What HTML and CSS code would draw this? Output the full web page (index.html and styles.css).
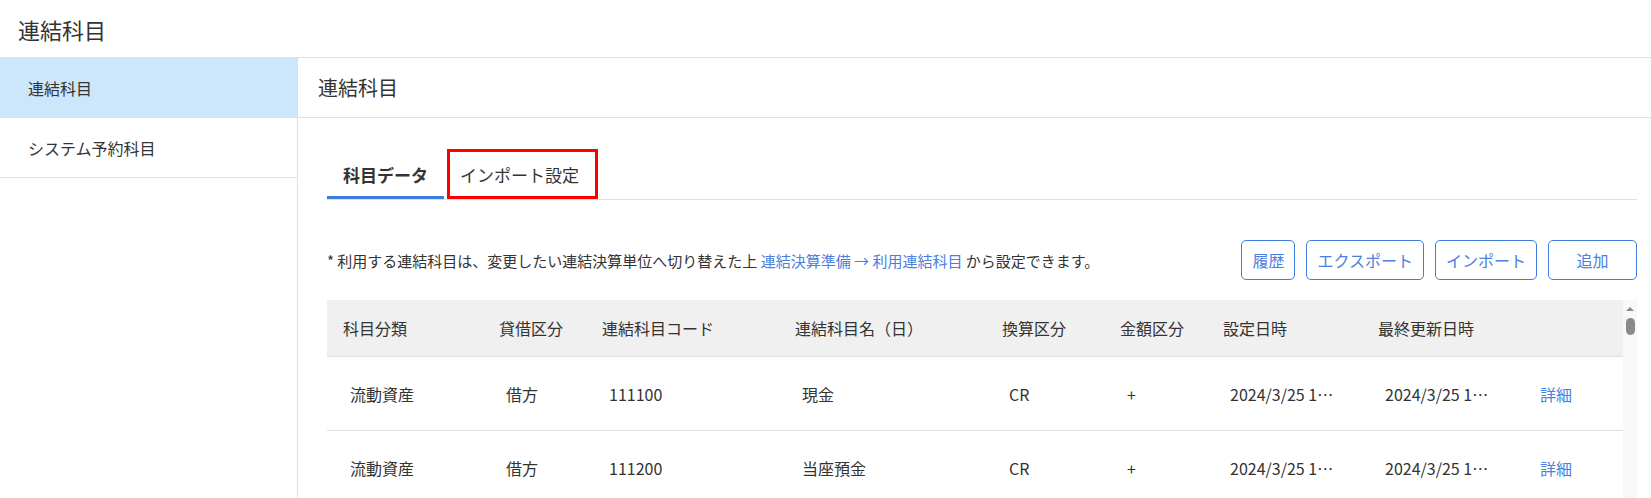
FILE: index.html
```html
<!DOCTYPE html>
<html lang="ja">
<head>
    <meta charset="UTF-8">
    <meta name="viewport" content="width=device-width, initial-scale=1.0">
    <title>連結科目</title>
    <link rel="stylesheet" href="styles.css">
</head>
<body>

    <header class="app-header">
        <h1>連結科目</h1>
    </header>

    <div class="layout">
        <nav class="sidebar">
            <a class="side-item active" href="#">連結科目</a>
            <a class="side-item" href="#">システム予約科目</a>
        </nav>

        <main class="content">
            <div class="content-title">連結科目</div>

            <div class="content-body">
                <div class="tabs">
                    <div class="tab active">科目データ</div>
                    <div class="tab marked">インポート設定</div>
                </div>

                <div class="toolbar">
                    <p class="notice">* 利用する連結科目は、変更したい連結決算単位へ切り替えた上 <a href="#">連結決算準備 → 利用連結科目</a> から設定できます。</p>
                    <div class="actions">
                        <button class="btn">履歴</button>
                        <button class="btn">エクスポート</button>
                        <button class="btn">インポート</button>
                        <button class="btn btn-wide">追加</button>
                    </div>
                </div>

                <div class="table-wrap">
                    <div class="table-scroll">
                        <table class="grid">
                            <colgroup>
                                <col style="width: 156px">
                                <col style="width: 103px">
                                <col style="width: 193px">
                                <col style="width: 207px">
                                <col style="width: 118px">
                                <col style="width: 103px">
                                <col style="width: 155px">
                                <col style="width: 155px">
                                <col>
                            </colgroup>
                            <thead>
                                <tr>
                                    <th>科目分類</th>
                                    <th>貸借区分</th>
                                    <th>連結科目コード</th>
                                    <th>連結科目名（日）</th>
                                    <th>換算区分</th>
                                    <th>金額区分</th>
                                    <th>設定日時</th>
                                    <th>最終更新日時</th>
                                    <th></th>
                                </tr>
                            </thead>
                            <tbody>
                                <tr>
                                    <td>流動資産</td>
                                    <td>借方</td>
                                    <td>111100</td>
                                    <td>現金</td>
                                    <td>CR</td>
                                    <td>+</td>
                                    <td>2024/3/25 10:12:45</td>
                                    <td>2024/3/25 10:12:45</td>
                                    <td><a href="#">詳細</a></td>
                                </tr>
                                <tr>
                                    <td>流動資産</td>
                                    <td>借方</td>
                                    <td>111200</td>
                                    <td>当座預金</td>
                                    <td>CR</td>
                                    <td>+</td>
                                    <td>2024/3/25 10:12:45</td>
                                    <td>2024/3/25 10:12:45</td>
                                    <td><a href="#">詳細</a></td>
                                </tr>
                            </tbody>
                        </table>
                    </div>
                    <div class="scrollbar">
                        <span class="scroll-up"></span>
                        <span class="scroll-thumb"></span>
                    </div>
                </div>
            </div>
        </main>
    </div>

</body>
</html>
```

FILE: styles.css
```css
body {
    font-family: "Noto Sans CJK JP", "Noto Sans", sans-serif;
    color: #333;
    margin: 0;
    padding: 0;
    height: 100vh;
    overflow: hidden;
    display: flex;
    flex-direction: column;
}

a {
    color: #4a80e0;
    text-decoration: none;
}

.app-header {
    height: 57px;
    border-bottom: 1px solid #e0e0e0;
    display: flex;
    align-items: center;
    padding-left: 18px;
    flex-shrink: 0;
}

.app-header h1 {
    font-size: 22px;
    font-weight: normal;
    margin: 0;
}

.layout {
    display: flex;
    flex: 1;
    min-height: 0;
}

.sidebar {
    width: 297px;
    border-right: 1px solid #e0e0e0;
    flex-shrink: 0;
    display: flex;
    flex-direction: column;
}

.side-item {
    height: 59px;
    border-bottom: 1px solid #e0e0e0;
    display: flex;
    align-items: center;
    padding-left: 28px;
    font-size: 16px;
    color: #333;
}

.side-item.active {
    background: #cce6fc;
}

.content {
    flex: 1;
    min-width: 0;
    display: flex;
    flex-direction: column;
}

.content-title {
    height: 59px;
    border-bottom: 1px solid #e0e0e0;
    display: flex;
    align-items: center;
    padding-left: 20px;
    font-size: 20px;
    flex-shrink: 0;
}

.content-body {
    padding: 31px 14px 0 29px;
    flex: 1;
    min-height: 0;
    display: flex;
    flex-direction: column;
}

.tabs {
    display: flex;
    border-bottom: 1px solid #e0e0e0;
}

.tab {
    height: 50px;
    padding: 0 16px;
    display: flex;
    align-items: center;
    font-size: 17px;
    box-sizing: border-box;
}

.tab.active {
    font-weight: bold;
    border-bottom: 3px solid #3b7ddd;
    padding-top: 3px;
}

/* 赤枠：注目箇所 */
.tab.marked {
    outline: 3px solid #ff0000;
    outline-offset: -3px;
    margin-left: 3px;
    padding: 0 19px 0 13px;
}

.toolbar {
    display: flex;
    align-items: center;
    justify-content: space-between;
    margin-top: 40px;
}

.notice {
    font-size: 15px;
    margin: 0;
}

.actions {
    display: flex;
    gap: 11px;
}

.btn {
    font-family: inherit;
    font-size: 16px;
    color: #4a80e0;
    background: white;
    border: 1px solid #3d7ede;
    border-radius: 5px;
    height: 40px;
    padding: 0 10px;
    cursor: pointer;
}

.btn-wide {
    width: 89px;
}

.table-wrap {
    display: flex;
    margin-top: 20px;
    flex: 1;
    min-height: 0;
    overflow: hidden;
}

.table-scroll {
    flex: 1;
    min-width: 0;
}

.grid {
    width: 100%;
    border-collapse: collapse;
    table-layout: fixed;
    font-size: 16px;
}

.grid th {
    background: #f0f0f0;
    font-weight: normal;
    text-align: left;
    height: 56px;
    padding: 0 0 0 16px;
    border-bottom: 1px solid #e0e0e0;
}

.grid td {
    height: 73px;
    padding: 0 22px 0 23px;
    border-bottom: 1px solid #e0e0e0;
    white-space: nowrap;
    overflow: hidden;
    text-overflow: ellipsis;
}

.scrollbar {
    width: 14px;
    background: #f8f8f8;
    display: flex;
    flex-direction: column;
    align-items: center;
    padding-top: 7px;
}

.scroll-up {
    width: 0;
    height: 0;
    border-left: 4px solid transparent;
    border-right: 4px solid transparent;
    border-bottom: 4px solid #8a8a8a;
}

.scroll-thumb {
    width: 9px;
    height: 17px;
    margin-top: 7px;
    background: #8a8a8a;
    border-radius: 5px;
}
```
